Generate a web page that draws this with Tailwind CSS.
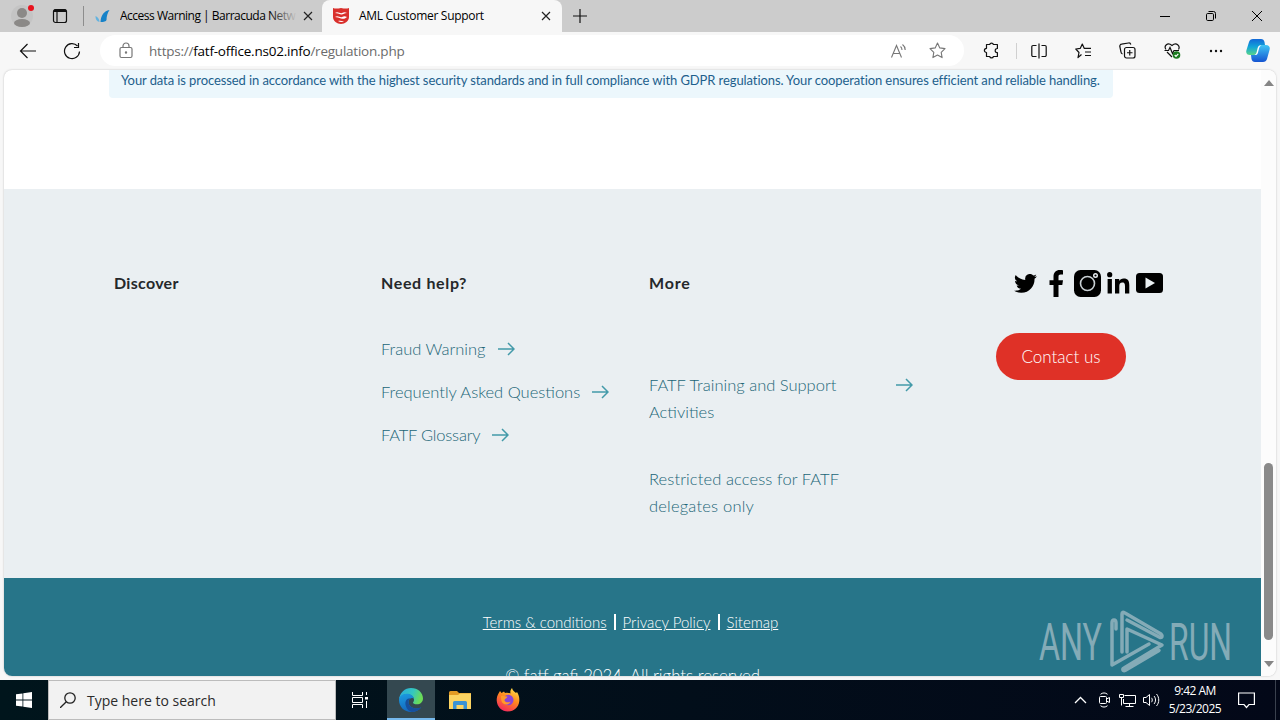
<!DOCTYPE html>
<html lang="en">
<head>
  <meta charset="UTF-8" />
  <meta name="viewport" content="width=device-width, initial-scale=1.0" />
  <title>AML Customer Support</title>
  <script src="https://cdn.jsdelivr.net/npm/@tailwindcss/browser@4"></script>
</head>
<body class="w-[1280px] h-[720px] overflow-hidden flex flex-col bg-[#f7f7f7] text-black relative font-['Open_Sans',sans-serif]">

  <!-- Title bar -->
  <header class="h-8 shrink-0 flex bg-[#cccccc] text-[12px]">
    <div class="w-11 flex justify-center items-center">
      <svg width="24" height="26" viewBox="0 0 24 26">
        <circle cx="12" cy="13" r="11" fill="#c4c4c4" />
        <circle cx="12" cy="10" r="5" fill="#8b8987" />
        <ellipse cx="12" cy="20" rx="8" ry="4" fill="#8b8987" />
        <circle cx="21" cy="5" r="3" fill="#e8121d" />
      </svg>
    </div>
    <div class="w-8 flex justify-center items-center">
      <svg width="16" height="16" viewBox="0 0 16 16" fill="none" stroke="#111" stroke-width="1.200">
        <rect x="1.500" y="1.500" width="13" height="13" rx="2" />
        <path d="M1.500 3.500h13M5 4v10.500" />
        <path d="M2 2.700h12" stroke-width="2.400" />
      </svg>
    </div>
    <div class="w-2 my-[6px] border-r border-[#8d8d8d]"></div>

    <div class="w-[238px] pl-[11px] pr-[9px] flex items-center">
      <svg class="mr-[9px] shrink-0" width="16" height="16" viewBox="0 0 16 16">
        <path d="M14.500 2C9 3 6 7 5.500 14c3.500 0 5.500-.5 6-2C11.500 8 12.500 5 14.500 2z" fill="#1682c8" />
        <path d="M.5 8c0 3 1 5.500 4 6C4.500 11.500 3 9 .5 8z" fill="#63b3e0" />
      </svg>
      <div class="relative w-[177px] overflow-hidden whitespace-nowrap tracking-[-0.49px]">Access Warning | Barracuda Netw
        <div class="absolute inset-y-0 right-0 w-7 bg-linear-to-r from-[#cccccc]/0 to-[#cccccc]"></div>
      </div>
      <svg class="ml-1.5" width="10" height="10" viewBox="0 0 10 10" stroke="#222" stroke-width="1.200"><path d="M1 1l8 8M9 1l-8 8" /></svg>
    </div>

    <div class="w-[240px] pl-[11px] pr-[11px] flex items-center bg-[#f7f7f7] rounded-t-lg">
      <svg class="mr-2.5 shrink-0" width="16" height="16" viewBox="0 0 16 16">
        <path d="M0 0c2.500 1 5 .5 8 0 3 .5 5.500 1 8 0v9c0 4-4 7-8 7s-8-3-8-7z" fill="#d9302c" />
        <path d="M2 5c3-2 5 1 7 0s3-1 5 0c-3 0-4 2-6 1.500S4 5 2 5zM2 9c3-2 5 1 7 0s3-1 5 0c-2 2-4 2-6 1.500S4 9 2 9zM5 13c3-1 4 .500 6 0-2 1.500-4 1-6 0z" fill="#fff" />
      </svg>
      <div class="flex-1 whitespace-nowrap tracking-[-0.3px]">AML Customer Support</div>
      <svg width="10" height="10" viewBox="0 0 10 10" stroke="#222" stroke-width="1.200"><path d="M1 1l8 8M9 1l-8 8" /></svg>
    </div>
    <div class="w-[35px] flex justify-center items-center">
      <svg width="14" height="14" viewBox="0 0 14 14" stroke="#111" stroke-width="1.200"><path d="M7 0v14M0 7h14" /></svg>
    </div>

    <div class="ml-auto flex">
      <div class="w-[46px] flex justify-center items-center"><svg width="10" height="10" viewBox="0 0 10 10" stroke="#000"><path d="M0 5.500h10" /></svg></div>
      <div class="w-[46px] flex justify-center items-center">
        <svg width="10" height="10" viewBox="0 0 10 10" fill="none" stroke="#000"><rect x=".5" y="2.500" width="7" height="7" rx="1.200" /><path d="M2.500.5h5a2 2 0 0 1 2 2v5" /></svg>
      </div>
      <div class="w-[46px] flex justify-center items-center"><svg width="10" height="10" viewBox="0 0 10 10" stroke="#000"><path d="M0 0l10 10M10 0L0 10" /></svg></div>
    </div>
  </header>

  <!-- Toolbar -->
  <nav class="h-[37px] shrink-0 flex items-center pl-1.5">
    <div class="w-11 flex justify-center">
      <svg width="18" height="16" viewBox="0 0 18 16" fill="none" stroke="#111" stroke-width="1.200"><path d="M17 8H1.500M8.500 1l-7 7 7 7" /></svg>
    </div>
    <div class="w-11 flex justify-center">
      <svg width="18" height="18" viewBox="0 0 18 18" fill="none" stroke="#111" stroke-width="1.200"><path d="M16.500 9.500A7.500 7.500 0 1 1 14.500 4M15.500 1v4.500H11" /></svg>
    </div>
    <div class="ml-1.5 w-[864px] h-[31px] rounded-full bg-white flex items-center">
      <svg class="ml-[19px]" width="14" height="18" viewBox="0 0 14 18" fill="none" stroke="#777" stroke-width="1.200"><rect x="1" y="5.500" width="12" height="10" rx="1.500" /><path d="M4 5.500V4a3 3 0 0 1 6 0v1.500" /><circle cx="7" cy="10.500" r=".6" fill="#777" /></svg>
      <div class="ml-4 flex-1 text-[13.5px] leading-5 text-[#6b6b6b] tracking-[-0.23px]">https://<span class="text-black">fatf-office.ns02.info</span>/regulation.php</div>
      <svg class="mr-[22px]" width="17" height="16" viewBox="0 0 17 16" fill="none" stroke="#777" stroke-width="1.100"><path d="M1.500 14.500L6.500 2.500l5 12M3.300 10.500h6.400M10.500 3.500c1 .8 1.500 2 1.500 3.500M12.500 1.500c1.700 1.300 2.700 3.300 2.700 5.500" /></svg>
      <svg class="mr-[18px]" width="17" height="17" viewBox="0 0 17 17" fill="none" stroke="#777" stroke-width="1.100" stroke-linejoin="round"><path d="M8.500 1l2.300 4.900 5.200.7-3.800 3.700.9 5.300-4.600-2.500-4.600 2.500.9-5.300L1 6.600l5.200-.7z" /></svg>
    </div>
    <div class="ml-[5px] w-11 flex justify-center">
      <svg width="16" height="17" viewBox="0 0 16 17" fill="none" stroke="#111" stroke-width="1.200" stroke-linejoin="round"><path d="M4 2.500h2.700a1.900 1.900 0 0 1 3.700 0h4v4a2 2 0 0 0-.2 4.200h.2v3.800h-4a1.900 1.900 0 0 1-3.700 0H3.500v-4a2.100 2.100 0 0 1 0-4.200V2.500z" /></svg>
    </div>
    <div class="w-1 h-4 border-r border-[#d0d0d0]"></div>
    <div class="w-11 flex justify-center">
      <svg width="16" height="16" viewBox="0 0 16 16" fill="none" stroke="#111" stroke-width="1.200"><path d="M5.500 2.500H2a1.200 1.200 0 0 0-1.200 1.200v8.600A1.200 1.200 0 0 0 2 13.500h3.500M10.500 2.500H14a1.200 1.200 0 0 1 1.200 1.200v8.600a1.200 1.200 0 0 1-1.200 1.200h-3.500M8 .5v15" /></svg>
    </div>
    <div class="w-11 flex justify-center">
      <svg width="17" height="16" viewBox="0 0 17 16" fill="none" stroke="#111" stroke-width="1.200" stroke-linejoin="round"><path d="M6.500 11.500L3 14.500l1-5L.8 6l4.400-.6L7.300 1l2 4.400H16M10 9h6M10 12.500h6" /></svg>
    </div>
    <div class="w-[45px] flex justify-center">
      <svg width="17" height="17" viewBox="0 0 17 17" fill="none" stroke="#111" stroke-width="1.200"><rect x="5.500" y="5.500" width="10.500" height="10.500" rx="2" /><path d="M10.750 8v5.500M8 10.750h5.500M3.500 12A2 2 0 0 1 2 10L.8 4.500A2 2 0 0 1 2.500 2.200L9.500 1a2 2 0 0 1 2.300 1.500" /></svg>
    </div>
    <div class="w-11 flex justify-center">
      <svg width="17" height="17" viewBox="0 0 17 17" fill="none" stroke="#111" stroke-width="1.200"><path d="M2 7.500C-.5 4 3.500-.5 8 3.500c4.500-4 8.500.5 6.500 4M.5 8.500h4l1.500-3 2.500 6 1.500-3h5M3 10l5 5" /><circle cx="12.500" cy="13" r="3.800" fill="#1b7a1f" stroke="none" /><path d="M10.700 13l1.300 1.300 2.300-2.500" stroke="#fff" /></svg>
    </div>
    <div class="w-11 flex justify-center">
      <svg width="14" height="4" viewBox="0 0 14 4" fill="#111"><circle cx="2" cy="2" r="1.200" /><circle cx="7" cy="2" r="1.200" /><circle cx="12" cy="2" r="1.200" /></svg>
    </div>
    <div class="w-10 flex justify-center">
      <svg width="24" height="23" viewBox="0 0 24 23">
        <defs>
          <linearGradient id="cpA" x1="0" y1="0" x2="0" y2="1"><stop offset="0" stop-color="#1268d8" /><stop offset=".5" stop-color="#12a5d8" /><stop offset="1" stop-color="#58d58a" /></linearGradient>
          <linearGradient id="cpB" x1="0" y1="0" x2="0" y2="1"><stop offset="0" stop-color="#3fc6f5" /><stop offset="1" stop-color="#1554d1" /></linearGradient>
        </defs>
        <path d="M7 0h8c2 0 3 1 3.500 3l.5 3h-3c-2 0-3 1-3.500 3l-1 4c-.5 2-1.500 3-3.500 3H4c-3 0-4.500-2-3.500-5L3 3c.6-2 2-3 4-3z" fill="url(#cpA)" />
        <path d="M17 23H9c-2 0-3-1-3.500-3L5 16h3c2 0 3-1 3.500-3l1-4c.5-2 1.500-3 3.500-3h4c3 0 4.500 2 3.500 5L21 20c-.6 2-2 3-4 3z" fill="url(#cpB)" />
        <path d="M13.500 6.500h1.800c-1.300.5-1.900 1.500-2.300 3l-1 4c-.4 1.500-1 2.200-2.200 2.500H8.500c1.300-.5 1.700-1.500 2.200-3l.8-3.500c.4-1.600 1-2.500 2-3z" fill="#fff" />
      </svg>
    </div>
  </nav>

  <!-- Page -->
  <div class="mx-1 mt-px h-[606px] shrink-0 flex bg-white rounded-lg overflow-hidden shadow-[0_0_2px_#00000040]">
    <main class="w-[1257px] h-full overflow-hidden flex flex-col font-[Lato,sans-serif]">
      <div class="h-[119px] shrink-0">
        <p class="ml-[105px] w-[1004px] h-[28px] pl-3 bg-[#ecf7fc] text-[#1d608c] text-[13px] leading-[20px] whitespace-nowrap tracking-[-0.092px] rounded-b">Your data is processed in accordance with the highest security standards and in full compliance with GDPR regulations. Your cooperation ensures efficient and reliable handling.</p>
      </div>

      <section class="h-[389px] shrink-0 bg-[#eaeff2] pt-20 pl-[110px] flex text-[16.5px] text-[#226677] font-light">
        <div class="w-[267px]">
          <h3 class="font-bold text-[16px] leading-[28px] text-[#25282b] tracking-[0.3px]">Discover</h3>
        </div>
        <div class="w-[268px] whitespace-nowrap">
          <h3 class="font-bold text-[16px] leading-[28px] text-[#25282b] tracking-[0.65px]">Need help?</h3>
          <ul class="mt-[39px] leading-[27px] flex flex-col gap-4">
            <li class="flex items-center gap-3">Fraud Warning
              <svg class="mb-0.5" width="17" height="14" viewBox="0 0 17 14" fill="none" stroke="#439aa9" stroke-width="1.500"><path d="M0 7h16M10 1l6 6-6 6" /></svg>
            </li>
            <li class="flex items-center gap-3">Frequently Asked Questions
              <svg class="mb-0.5" width="17" height="14" viewBox="0 0 17 14" fill="none" stroke="#439aa9" stroke-width="1.500"><path d="M0 7h16M10 1l6 6-6 6" /></svg>
            </li>
            <li class="flex items-center gap-3"><span class="w-[99px] tracking-[-0.2px]">FATF Glossary</span>
              <svg class="mb-0.5" width="17" height="14" viewBox="0 0 17 14" fill="none" stroke="#439aa9" stroke-width="1.500"><path d="M0 7h16M10 1l6 6-6 6" /></svg>
            </li>
          </ul>
        </div>
        <div class="w-[347px]">
          <h3 class="font-bold text-[16px] leading-[28px] text-[#25282b] tracking-[0.8px]">More</h3>
          <div class="mt-[75px] w-[264px] flex justify-between leading-[27px]">
            <p>FATF Training and Support<br />Activities</p>
            <svg class="mt-[6px]" width="17" height="14" viewBox="0 0 17 14" fill="none" stroke="#439aa9" stroke-width="1.500"><path d="M0 7h16M10 1l6 6-6 6" /></svg>
          </div>
          <p class="mt-10 leading-[27px]"><span class="tracking-[0.1px]">Restricted access for FATF</span><br /><span class="tracking-[0.2px]">delegates only</span></p>
        </div>
        <div>
          <div class="h-[28px] pl-[18px] flex items-center">
            <svg class="mr-3" width="23" height="19" viewBox="0 0 24 20"><path d="M24 2.400a10 10 0 0 1-2.800.8A4.900 4.900 0 0 0 23.300.5a10 10 0 0 1-3.100 1.200 4.900 4.900 0 0 0-8.400 4.500A14 14 0 0 1 1.700 1a4.900 4.900 0 0 0 1.500 6.600A4.900 4.900 0 0 1 1 7c0 2.300 1.600 4.400 3.900 4.900a5 5 0 0 1-2.200.1 4.900 4.900 0 0 0 4.600 3.400A9.900 9.900 0 0 1 0 17.500a14 14 0 0 0 7.500 2.200c9.100 0 14.300-7.700 14-14.600A10 10 0 0 0 24 2.400z" /></svg>
            <svg class="mr-[10px]" width="15" height="27" viewBox="0 0 15 27"><path d="M4.500 27V15H.5v-4.800h4V6.500C4.500 2.500 7 0 10.800 0c1.500 0 2.800.1 3.200.2v4.300h-2.300c-1.700 0-2.200.9-2.200 2.300v3.400H14l-.7 4.800H9.500v12z" /></svg>
            <svg class="mr-1.5" width="27" height="27" viewBox="0 0 27 27"><rect width="27" height="27" rx="6.500" /><circle cx="13.500" cy="13.500" r="7" fill="none" stroke="#c9d0d4" stroke-width="1.600" /><circle cx="21.500" cy="5.500" r="1.800" fill="none" stroke="#eaeff2" stroke-width="1.400" /></svg>
            <svg class="mr-1.5" width="23" height="22" viewBox="0 0 23 22"><circle cx="2.700" cy="2.700" r="2.600" /><path d="M.6 7h4.300v14.500H.6zM8 7h4.200v2c.8-1.400 2.300-2.400 4.500-2.400 4.400 0 5.600 2.700 5.600 6.800v8.100H18v-7.200c0-2-.2-3.900-2.600-3.900s-3.100 1.700-3.100 3.800v7.300H8z" /></svg>
            <svg width="27" height="20" viewBox="0 0 27 20"><rect width="27" height="20" rx="3.500" /><path d="M9.500 4.500l9.500 5.500-9.500 5.500z" fill="#eaeff2" /></svg>
          </div>
          <button class="mt-9 w-[130px] h-[47px] rounded-full bg-[#df3127] text-white text-[17px]">Contact us</button>
        </div>
      </section>

      <footer class="h-[98px] shrink-0 bg-[#277589] text-white text-center whitespace-nowrap font-light">
        <div class="pt-9 pr-1 flex justify-center items-center text-[15px] leading-4">
          <a class="underline">Terms &amp; conditions</a>
          <span class="mx-[7px] w-0.5 h-4 bg-white"></span>
          <a class="underline">Privacy Policy</a>
          <span class="mx-[7px] w-0.5 h-4 bg-white"></span>
          <a class="underline">Sitemap</a>
        </div>
        <p class="mt-9 pl-1 text-[16.8px] leading-[20px]">© fatf gafi 2024. All rights reserved.</p>
      </footer>
    </main>

    <!-- Scrollbar -->
    <aside class="w-[15px] flex flex-col items-center bg-[#fcfcfc]">
      <svg class="mt-2.5" width="10" height="6" viewBox="0 0 10 6" fill="#858585"><path d="M5 0l5 6H0z" /></svg>
      <div class="mt-[377px] w-[9px] h-[177px] rounded-full bg-[#8a8a8a]"></div>
      <svg class="mt-[21px]" width="10" height="6" viewBox="0 0 10 6" fill="#858585"><path d="M0 0h10L5 6z" /></svg>
    </aside>
  </div>

  <!-- Taskbar -->
  <div class="mt-auto h-10 shrink-0 flex items-center bg-linear-to-r from-[#00151c] to-[#030818] text-white">
    <div class="w-12 flex justify-center">
      <svg width="16" height="16" viewBox="0 0 16 16" fill="#fff"><path d="M0 2.300l6.500-.9v6.200H0zM7.300 1.300L16 0v7.600H7.300zM0 8.400h6.500v6.200L0 13.700zM7.300 8.400H16V16l-8.700-1.300z" /></svg>
    </div>
    <div class="w-[288px] h-10 pl-[11px] flex items-center bg-[#f2f2f2] border border-[#bcbcbc] text-[#2b2b2b] text-[14px]">
      <svg class="mr-[11px]" width="16" height="16" viewBox="0 0 16 16" fill="none" stroke="#222" stroke-width="1.300"><circle cx="10" cy="6" r="5.200" /><path d="M6.300 9.700L0 16" /></svg>
      Type here to search
    </div>
    <div class="w-[51px] pr-1 flex justify-center">
      <svg width="18" height="16" viewBox="0 0 18 16" fill="none" stroke="#fff"><path d="M1.500 0v3.500h10V0M1.500 16v-3.500h10V16M1.500 5.500h10v5h-10zM15.500 0v3M15.500 9v7" /><path d="M14 5h3v2.500h-3z" fill="#fff" stroke="none" /></svg>
    </div>
    <div class="w-12 h-10 flex justify-center items-center bg-[#344850] border-b-2 border-[#76b9ed]">
      <svg class="mt-0.5" width="24" height="24" viewBox="0 0 24 24">
        <defs>
          <linearGradient id="edA" x1="0" y1="0" x2="1" y2=".3"><stop offset="0" stop-color="#28a9e0" /><stop offset=".6" stop-color="#34c7c0" /><stop offset="1" stop-color="#6bdc57" /></linearGradient>
          <linearGradient id="edB" x1="0" y1="0" x2=".3" y2="1"><stop offset="0" stop-color="#1b9de2" /><stop offset="1" stop-color="#1467bd" /></linearGradient>
        </defs>
        <path d="M0 12C.5 4.500 6 0 12 0c7 0 12 4.800 12 10.500 0 3.500-2.800 5.800-6 5.800-2.500 0-4-.8-4-1.600 0-.6 1-1 1-2.900C15 8.500 11.500 6 8 6S1 8.500 0 12z" fill="url(#edA)" />
        <path d="M0 12c0-3.500 3.500-6.300 7.500-6.300 4.200 0 7 2 7.500 5-1-1.200-5.500-1-5.500 3.300 0 4 4 6.500 8 6.500 2 0 3.600-.6 4.800-1.200C20 22.300 16.500 24 12 24 5.500 24 0 19 0 12z" fill="url(#edB)" />
        <path d="M9.500 14c0-2 1-3.200 2-3.700C8 10 6 13 6.500 16.500 7 20 9.500 23.200 13 24c4 0 7.300-2 9.300-4.700-1.200.6-2.800 1.200-4.800 1.200-4 0-8-2.500-8-6.500z" fill="#174f9c" />
      </svg>
    </div>
    <div class="w-[49px] flex justify-center">
      <svg width="22" height="19" viewBox="0 0 22 19"><path d="M0 1.500A1.500 1.500 0 0 1 1.500 0H8l2 2h12v4H0z" fill="#e39b24" /><path d="M0 4h9l2-1.500h11V18H0z" fill="#fcd462" /><path d="M4 18v-6.500A1.500 1.500 0 0 1 5.500 10h11a1.500 1.500 0 0 1 1.500 1.500V18h-3.500v-4h-7v4z" fill="#3a93d5" /></svg>
    </div>
    <div class="w-12 flex justify-center">
      <svg width="24" height="24" viewBox="0 0 24 24">
        <defs><linearGradient id="ffA" x1=".8" y1="0" x2=".3" y2="1"><stop offset="0" stop-color="#ffe14a" /><stop offset=".45" stop-color="#ff8a1e" /><stop offset="1" stop-color="#f4265e" /></linearGradient></defs>
        <path d="M2.500 5.500L4 3l1.500 2L8 3.500 9 5c2-.6 4-.3 5.500.6C14 3.500 14.500 1.500 16 0c.6 2.500 2.500 3.500 4 5l1-1c2 3 2.500 6 2.300 9C22.800 19.300 18 23.500 12 23.500S1 19 .7 12.500C.6 10 1.300 7.500 2.500 5.500z" fill="url(#ffA)" />
        <circle cx="12.300" cy="12" r="5.200" fill="#8a45d6" />
        <path d="M5 8c3-1 4 .5 6.500.5-.5 2-3 2-3 4 1 2 4 2.500 6 1-1 4-8 4-9-.5C5 11 5 9.500 5 8z" fill="#ff9a2a" />
      </svg>
    </div>

    <div class="ml-auto flex items-center">
      <svg class="mr-[11px]" width="13" height="8" viewBox="0 0 13 8" fill="none" stroke="#fff" stroke-width="1.300"><path d="M1 7l5.500-5.500L12 7" /></svg>
      <svg class="mr-[8px]" width="13" height="16" viewBox="0 0 13 16" fill="none" stroke="#fff"><rect x="1.500" y="4.500" width="7" height="7" rx="1" /><path d="M8.500 7l3-1.500v5L8.500 9M2.500 2.300c2-1.800 5-1.800 7 0M2.500 13.700c2 1.800 5 1.800 7 0" /></svg>
      <svg class="mr-[7px]" width="17" height="15" viewBox="0 0 17 15" fill="none" stroke="#fff"><path d="M5.500 2.500h11v8h-12V6M10.500 10.500v3M6.500 13.500h8M.5 1.500h4v3h-4zM2.500 4.500v8" /></svg>
      <svg class="mr-2" width="17" height="14" viewBox="0 0 17 14" fill="none" stroke="#fff"><path d="M.5 4.500h2.500l3.500-3v11l-3.500-3H.500zM8.500 4.800c1 1.200 1 3.200 0 4.400M11 3c2 2.300 2 5.700 0 8M13.500 1c3 3.500 3 8.500 0 12" /></svg>
      <div class="w-[54px] text-center text-[12px] leading-[18px] tracking-[-0.5px] whitespace-nowrap">9:42 AM<br />5/23/2025</div>
      <svg class="ml-4" width="17" height="17" viewBox="0 0 17 17" fill="none" stroke="#fff" stroke-width="1.200"><path d="M.6 1h15.800v11.500h-5.400L8.500 15.500 6 12.500H.6z" /></svg>
      <div class="ml-5 mr-1 w-px h-10 bg-[#3a414e]"></div>
    </div>
  </div>

  <!-- Watermark -->
  <svg class="absolute left-[1036px] top-[606px] opacity-60" width="204" height="68" viewBox="0 0 204 68" fill="#c2d0d6">
    <text x="3" y="54" font-family="Roboto" font-weight="400" font-size="52" textLength="63" lengthAdjust="spacingAndGlyphs">ANY</text>
    <g fill="none" stroke="#c2d0d6" stroke-width="3.500" stroke-linejoin="round" stroke-linecap="round">
      <path d="M80 23v-6c0-4-4-4-4 0v42l37-21" />
      <path d="M86 46V8c0-2 1-2 3-1l36 21c2 2 1 4-1 3.500L91 14" />
      <path d="M91 46V23l35 16-38 23c-2 1-1 3.500 1 2.500l34-20" />
    </g>
    <text x="133" y="54" font-family="Roboto" font-weight="400" font-size="52" textLength="63" lengthAdjust="spacingAndGlyphs">RUN</text>
  </svg>
</body>
</html>
